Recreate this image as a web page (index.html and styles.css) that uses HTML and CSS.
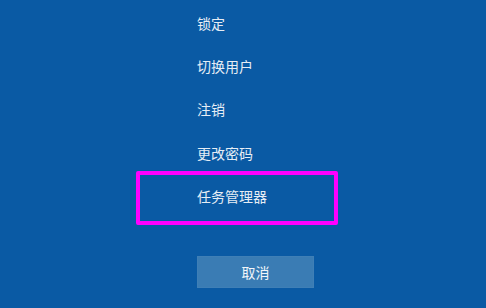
FILE: index.html
```html
<!DOCTYPE html>
<html lang="zh-CN">
<head>
  <meta charset="UTF-8">
  <meta name="viewport" content="width=device-width, initial-scale=1.0">
  <title>安全选项</title>
  <link rel="stylesheet" href="styles.css">
</head>
<body>
  <div class="screen">
    <ul class="options">
      <li class="option">锁定</li>
      <li class="option">切换用户</li>
      <li class="option">注销</li>
      <li class="option">更改密码</li>
      <li class="option marked">任务管理器</li>
    </ul>
    <button type="button" class="cancel">取消</button>
  </div>
</body>
</html>
```

FILE: styles.css
```css
html * {
  font-family: "Noto Sans CJK SC", "Noto Sans", sans-serif;
}

body {
  margin: 0;
  background-color: #0a5aa4;
}

.screen {
  box-sizing: border-box;
  width: 486px;
  height: 308px;
  padding-left: 197px;
  padding-top: 1px;
}

.options {
  list-style: none;
  margin: 0;
  padding: 0;
}

.option {
  height: 43.4px;
  display: flex;
  align-items: center;
  color: #e6edf5;
  font-size: 14px;
}

/* highlight frame drawn over the last entry */
.option.marked {
  position: relative;
}

.option.marked::after {
  content: "";
  position: absolute;
  left: -61px;
  width: 202px;
  top: -4px;
  height: 54px;
  box-sizing: border-box;
  border: 4px solid #ff00ff;
  border-radius: 2px;
}

.cancel {
  display: block;
  margin-top: 38px;
  width: 117px;
  height: 32px;
  border: 1px solid #3f7fb6;
  background-color: #3a7cb4;
  color: #f2f6fa;
  font-size: 14px;
  padding: 0;
}
```
